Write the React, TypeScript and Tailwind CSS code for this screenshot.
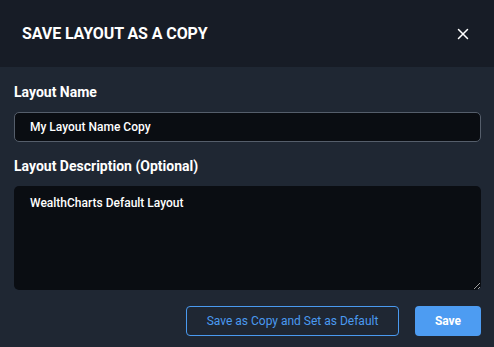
import { X } from "lucide-react";

export default function App() {
  return (
    <div className="flex h-[347px] w-[494px] flex-col bg-[#1f2733] font-['Roboto',sans-serif] text-white">
      <div className="flex h-[67px] shrink-0 items-center justify-between bg-[#171c26] pl-[22px] pr-[22px]">
        <h1 className="text-[16px] font-bold tracking-[-0.1px]">SAVE LAYOUT AS A COPY</h1>
        <X className="h-[18px] w-[18px] text-white" strokeWidth={2} />
      </div>

      <div className="flex flex-col pl-[14px] pr-[13px] pt-[16px]">
        <label className="text-[14px] font-bold leading-[18px]">Layout Name</label>
        <input
          className="mt-[11px] h-[30px] rounded-[5px] border border-[#555e6b] bg-[#0a0d12] px-[15px] text-[12px] font-medium text-white outline-none"
          defaultValue="My Layout Name Copy"
        />
        <label className="mt-[15px] text-[14px] font-bold leading-[18px]">Layout Description (Optional)</label>
        <textarea
          className="mt-[11px] h-[104px] resize-y rounded-[5px] bg-[#0a0d12] px-[16px] py-[8px] text-[12px] font-medium text-white outline-none"
          defaultValue="WealthCharts Default Layout"
        />
        <div className="mt-[16px] flex justify-end gap-[16px]">
          <button className="h-[30px] w-[213px] rounded-[4px] border border-[#4a9af0] text-[12px] text-[#4a9af0]">
            Save as Copy and Set as Default
          </button>
          <button className="h-[30px] w-[66px] rounded-[4px] bg-[#4d9cf2] text-[12px] font-bold text-white">
            Save
          </button>
        </div>
      </div>
    </div>
  );
}
